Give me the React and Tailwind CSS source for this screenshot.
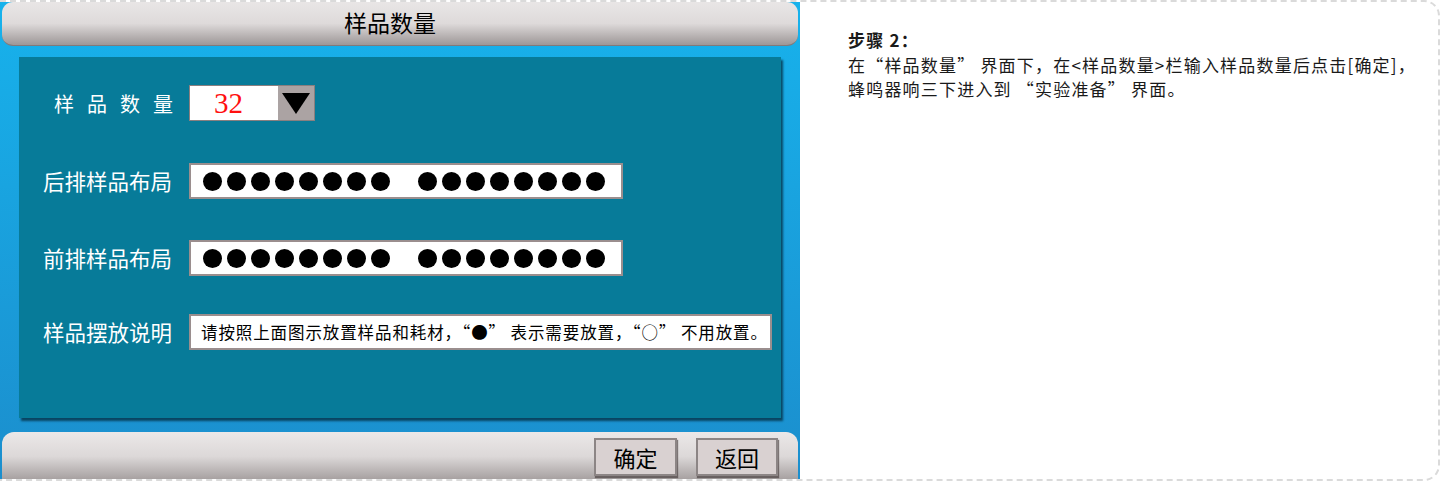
const sans = { fontFamily: '"Noto Sans CJK SC", "Noto Sans", sans-serif' };

function Dots() {
  const group = Array.from({ length: 8 });
  return (
    <div className="flex items-center pl-[12px]">
      <div className="flex gap-[5px]">
        {group.map((_, i) => (
          <span key={i} className="w-[19px] h-[19px] rounded-full bg-black" />
        ))}
      </div>
      <div className="flex gap-[5px] ml-[28px]">
        {group.map((_, i) => (
          <span key={i} className="w-[19px] h-[19px] rounded-full bg-black" />
        ))}
      </div>
    </div>
  );
}

function Row({ label, children, className }) {
  return (
    <div className={"flex items-center " + (className || "")}>
      <div className="w-[170px] text-[21.5px] text-white leading-none pl-[24px]">{label}</div>
      {children}
    </div>
  );
}

export default function App() {
  return (
    <div className="w-[1440px] h-[481px] bg-white overflow-hidden" style={sans}>
      <div className="relative w-full h-full border-2 border-l-0 border-dashed border-[#dadada] rounded-r-[16px] flex overflow-hidden">
        {/* device screen */}
        <div className="w-[800px] -mt-[2px] -mb-[2px] shrink-0 flex flex-col bg-gradient-to-b from-[#17b2ec] to-[#1b8ecd] px-[2px] pt-[2px]">
          <div className="h-[44px] rounded-[11px] bg-gradient-to-b from-[#e9e6e6] via-[#dedada] to-[#9d9797] border-b border-[#807a7a] flex items-center justify-center pr-[20px]">
            <span className="text-[23px] text-black leading-none -mt-[2px]">样品数量</span>
          </div>

          <div className="mt-[11px] mx-[17px] h-[361px] bg-[#077b99] shadow-[2px_3px_2px_rgba(5,50,70,0.8)] flex flex-col">
            <Row label={<span className="tracking-[13px] text-[20px] pl-[11px]">样品数量</span>} className="mt-[28px]">
              <div className="flex h-[36px] border border-[#8a7f7f]">
                <div className="w-[88px] bg-white flex items-center pl-[24px]">
                  <span className="text-[29px] text-[#ff1010] leading-none" style={{ fontFamily: '"Liberation Serif", serif' }}>32</span>
                </div>
                <div className="w-[36px] bg-[#aba3a3] flex items-center justify-center">
                  <svg width="28" height="21" viewBox="0 0 28 21">
                    <polygon points="0,0 28,0 14,21" fill="#000" />
                  </svg>
                </div>
              </div>
            </Row>

            <Row label="后排样品布局" className="mt-[42px]">
              <div className="w-[434px] h-[36px] bg-white border-2 border-[#9a8e8e] flex items-center">
                <Dots />
              </div>
            </Row>

            <Row label="前排样品布局" className="mt-[41px]">
              <div className="w-[434px] h-[36px] bg-white border-2 border-[#9a8e8e] flex items-center">
                <Dots />
              </div>
            </Row>

            <Row label="样品摆放说明" className="mt-[38px]">
              <div className="w-[583px] h-[36px] bg-white border-2 border-[#9a8e8e] flex items-center pl-[10px] text-[16.5px] tracking-[0.9px] text-black whitespace-nowrap">
                请按照上面图示放置样品和耗材，“●” 表示需要放置，“○” 不用放置。
              </div>
            </Row>
          </div>

          <div className="mt-auto h-[49px] rounded-t-[12px] bg-gradient-to-b from-[#ebe8e8] via-[#dcd8d8] to-[#a39d9d] flex items-center justify-end pr-[20px] gap-[19px]">
            <button className="w-[83px] h-[38px] bg-[#d9d1d1] border-2 border-[#8c8585] shadow-[1px_2px_1px_rgba(60,50,50,0.6)] text-[22px] text-black leading-none">确定</button>
            <button className="w-[82px] h-[38px] bg-[#d9d1d1] border-2 border-[#8c8585] shadow-[1px_2px_1px_rgba(60,50,50,0.6)] text-[22px] text-black leading-none">返回</button>
          </div>
        </div>

        {/* description */}
        <div className="pl-[48px] pt-[26px] text-[17px] leading-[24.5px] tracking-[1.2px] text-[#1a1a1a]">
          <div className="font-bold">步骤 2：</div>
          <div>在“样品数量” 界面下，在&lt;样品数量&gt;栏输入样品数量后点击[确定]，</div>
          <div>蜂鸣器响三下进入到 “实验准备” 界面。</div>
        </div>
      </div>
    </div>
  );
}
